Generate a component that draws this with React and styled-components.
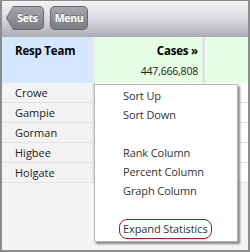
import React from 'react'
import styled, { createGlobalStyle } from 'styled-components'

const GlobalStyle = createGlobalStyle`
    html, body {
        margin: 0;
        padding: 0;
        background: #ffffff;
    }
`

const rows = ['Crowe', 'Gampie', 'Gorman', 'Higbee', 'Holgate']

const menuItems = [
    'Sort Up',
    'Sort Down',
    '',
    'Rank Column',
    'Percent Column',
    'Graph Column',
    '',
    'Expand Statistics'
]

const Frame = styled.div`
    position: relative;
    width: 250px;
    height: 252px;
    box-sizing: border-box;
    border: 2px solid #8c8c8c;
    border-top-width: 1px;
    border-bottom-width: 2px;
    background: #f4f4f4;
    font-family: "Open Sans", "DejaVu Sans", sans-serif;
    overflow: hidden;
`

const Toolbar = styled.div`
    display: flex;
    align-items: center;
    gap: 6px;
    height: 36px;
    box-sizing: border-box;
    padding: 0 0 2px 4px;
    background: linear-gradient(#f4f4f6 0%, #dcdce2 45%, #acacb6 100%);
`

const ButtonEdge = styled.div`
    width: ${p => p.$w}px;
    height: 24px;
    box-sizing: border-box;
    padding: 1px;
    border-radius: 5px;
    background: #66686d;
    clip-path: ${p => (p.$back ? 'polygon(7px 0, 100% 0, 100% 100%, 7px 100%, 0 50%)' : 'none')};
`

const ButtonFace = styled.div`
    height: 100%;
    display: flex;
    align-items: center;
    justify-content: center;
    padding-left: ${p => (p.$back ? '5px' : '0')};
    box-sizing: border-box;
    border-radius: 4px;
    background: linear-gradient(#a6a8ae, #7a7c82);
    clip-path: ${p => (p.$back ? 'polygon(6px 0, 100% 0, 100% 100%, 6px 100%, 0 50%)' : 'none')};
    color: #ffffff;
    font-weight: bold;
    font-size: 10.5px;
    letter-spacing: -0.3px;
    text-shadow: 0 -1px 0 rgba(0, 0, 0, 0.3);
`

const HeaderRow = styled.div`
    display: grid;
    grid-template-columns: 90px 3px 107px 3px 1fr;
    height: 46px;
`

const HeadCell = styled.div`
    background: ${p => p.$bg};
    display: flex;
    flex-direction: column;
    align-items: ${p => (p.$right ? 'flex-end' : 'flex-start')};
    padding: ${p => (p.$right ? '5px 4px 0 0' : '5px 0 0 13px')};
    box-sizing: border-box;
    font-size: 11px;
    color: #000000;
`

const Divider = styled.div`
    background: ${p => p.$bg};
`

const HeadTitle = styled.div`
    font-weight: bold;
    font-size: 11.5px;
    line-height: 18px;
    letter-spacing: -0.2px;
`

const HeadValue = styled.div`
    font-size: 10.5px;
    line-height: 16px;
    margin-top: 3px;
    color: #222222;
    letter-spacing: -0.2px;
`

const Row = styled.div`
    display: grid;
    grid-template-columns: 90px 3px 1fr;
    height: 20px;
`

const NameCell = styled.div`
    background: #f3f3f3;
    border-bottom: 1px solid #e2e2e2;
    padding-left: 13px;
    font-size: 11px;
    line-height: 19px;
    color: #222222;
`

const DataCell = styled.div`
    background: #ffffff;
    border-bottom: 1px solid #e6e6e6;
`

const Menu = styled.div`
    position: absolute;
    left: 92px;
    top: 83px;
    width: 144px;
    height: 158px;
    box-sizing: border-box;
    background: #ffffff;
    border: 1px solid #b4b4b4;
    box-shadow: 2px 2px 2px rgba(0, 0, 0, 0.45);
    padding-top: 1px;
`

const MenuItem = styled.div`
    height: 19px;
    display: flex;
    align-items: center;
    padding-left: ${p => (p.$boxed ? '24px' : '28px')};
    font-size: 11px;
    color: #333333;
    letter-spacing: -0.1px;

    span {
        ${p => p.$boxed && `
            border: 1.5px solid #9b1c26;
            border-radius: 8px;
            padding: 1px 3px 2px 3px;
        `}
    }
`

const App = () => {
    return (
        <>
            <GlobalStyle />
            <Frame>
                <Toolbar>
                    <ButtonEdge $back $w={38}>
                        <ButtonFace $back>Sets</ButtonFace>
                    </ButtonEdge>
                    <ButtonEdge $w={38}>
                        <ButtonFace>Menu</ButtonFace>
                    </ButtonEdge>
                </Toolbar>
                <HeaderRow>
                    <HeadCell $bg="#d4e7fe">
                        <HeadTitle>Resp Team</HeadTitle>
                    </HeadCell>
                    <Divider $bg="#e4ece4" />
                    <HeadCell $bg="#e6fde6" $right>
                        <HeadTitle>Cases &raquo;</HeadTitle>
                        <HeadValue>447,666,808</HeadValue>
                    </HeadCell>
                    <Divider $bg="#dfe6df" />
                    <HeadCell $bg="#e6fde6" />
                </HeaderRow>
                {rows.map(name => (
                    <Row key={name}>
                        <NameCell>{name}</NameCell>
                        <Divider $bg="#dbe5ee" />
                        <DataCell />
                    </Row>
                ))}
                <Menu>
                    {menuItems.map((item, i) => (
                        <MenuItem key={i} $boxed={item === 'Expand Statistics'}>
                            <span>{item}</span>
                        </MenuItem>
                    ))}
                </Menu>
            </Frame>
        </>
    )
}

export default App
